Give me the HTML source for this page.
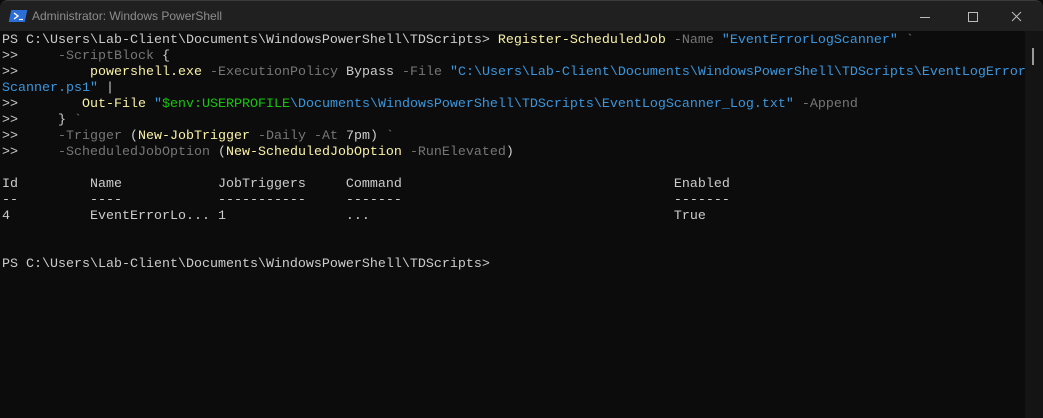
<!DOCTYPE html>
<html><head><meta charset="utf-8"><style>
html,body{margin:0;padding:0;width:1043px;height:418px;overflow:hidden;background:#0c0c0c}
.tb{position:absolute;left:0;top:0;width:1043px;height:31px;background:#202020;border-top:1px solid #3a3a3a;box-sizing:border-box;border-radius:8px 8px 0 0}
.title{position:absolute;left:32px;top:8px;font:12px "Liberation Sans",sans-serif;color:#8d8d8d}
.ic{position:absolute;left:10px;top:9px;width:16px;height:12px;background:#2b6ed8;transform:skewX(-12deg)}
.term{position:absolute;left:2px;top:33px;font:13.33px/16px "Liberation Mono",monospace;color:#cccccc;white-space:pre;margin:0}
.sb{position:absolute;left:1025px;top:31px;width:18px;height:387px;background:#141414}
.th{position:absolute;left:1032px;top:48px;width:2px;height:17px;background:#9a9a9a}
.g{color:#767676}.y{color:#f9f1a5}.b{color:#3a96dd}.gr{color:#16c60c}
</style></head><body>
<div class="tb">
<div class="ic"></div>
<svg style="position:absolute;left:12px;top:10px" width="14" height="10"><path d="M2 2 L6 5 L2 8" stroke="#fff" stroke-width="1.4" fill="none"/><path d="M7 8.5H11" stroke="#fff" stroke-width="1.2"/></svg>
<div class="title">Administrator: Windows PowerShell</div>
<svg style="position:absolute;left:920px;top:8px" width="110" height="16"><path d="M0 8.5H10" stroke="#bbb" stroke-width="1"/><rect x="48.5" y="3.5" width="9" height="9" stroke="#bbb" fill="none"/><path d="M92 3L101 12M101 3L92 12" stroke="#bbb" stroke-width="1"/></svg>
</div>
<div class="sb"></div><div class="th"></div>
<pre class="term">PS C:\Users\Lab-Client\Documents\WindowsPowerShell\TDScripts&gt; <span class="y">Register-ScheduledJob</span> <span class="g">-Name</span> <span class="b">"EventErrorLogScanner"</span> <span class="g">`</span>
&gt;&gt;     <span class="g">-ScriptBlock</span> {
&gt;&gt;         <span class="y">powershell.exe</span> <span class="g">-ExecutionPolicy</span> Bypass <span class="g">-File</span> <span class="b">"C:\Users\Lab-Client\Documents\WindowsPowerShell\TDScripts\EventLogError</span>
<span class="b">Scanner.ps1"</span> |
&gt;&gt;        <span class="y">Out-File</span> <span class="b">"</span><span class="gr">$env:USERPROFILE</span><span class="b">\Documents\WindowsPowerShell\TDScripts\EventLogScanner_Log.txt"</span> <span class="g">-Append</span>
&gt;&gt;     } <span class="g">`</span>
&gt;&gt;     <span class="g">-Trigger</span> (<span class="y">New-JobTrigger</span> <span class="g">-Daily</span> <span class="g">-At</span> 7pm) <span class="g">`</span>
&gt;&gt;     <span class="g">-ScheduledJobOption</span> (<span class="y">New-ScheduledJobOption</span> <span class="g">-RunElevated</span>)

Id         Name            JobTriggers     Command                                  Enabled
--         ----            -----------     -------                                  -------
4          EventErrorLo... 1               ...                                      True


PS C:\Users\Lab-Client\Documents\WindowsPowerShell\TDScripts&gt;</pre>
</body></html>
